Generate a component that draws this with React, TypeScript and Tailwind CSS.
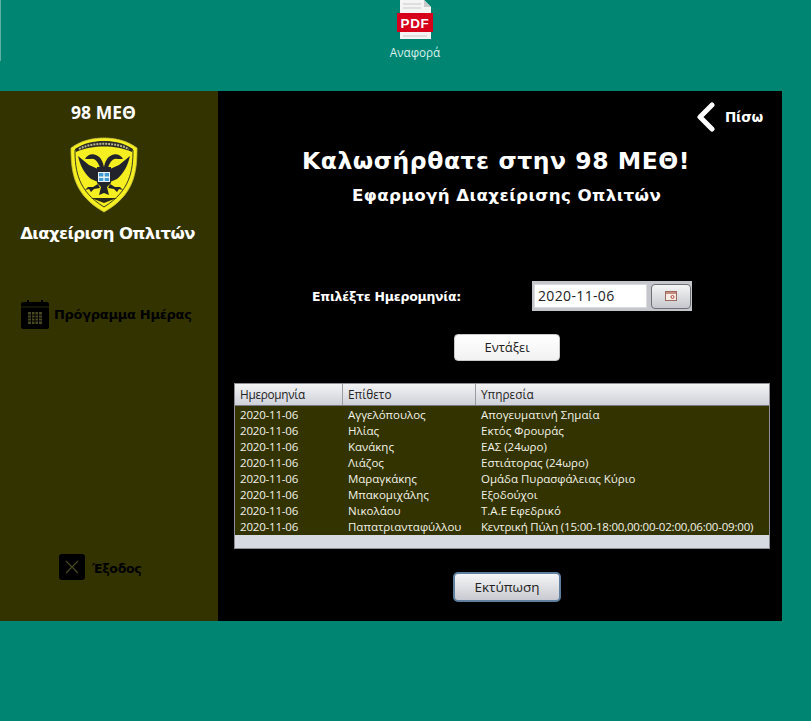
import React from "react";

const rows = [
  ["2020-11-06", "Αγγελόπουλος", "Απογευματινή Σημαία"],
  ["2020-11-06", "Ηλίας", "Εκτός Φρουράς"],
  ["2020-11-06", "Κανάκης", "ΕΑΣ (24ωρο)"],
  ["2020-11-06", "Λιάζος", "Εστιάτορας (24ωρο)"],
  ["2020-11-06", "Μαραγκάκης", "Ομάδα Πυρασφάλειας Κύριο"],
  ["2020-11-06", "Μπακομιχάλης", "Εξοδούχοι"],
  ["2020-11-06", "Νικολάου", "Τ.Α.Ε Εφεδρικό"],
  ["2020-11-06", "Παπατριανταφύλλου", "Κεντρική Πύλη (15:00-18:00,00:00-02:00,06:00-09:00)"],
];

const PdfIcon = () => (
  <svg width="36" height="39" viewBox="0 0 36 39">
    <path d="M3 0H27L34 7V39H3Z" fill="#f4f4f4" />
    <path d="M27 0V7H34Z" fill="#c9c9c9" />
    <path d="M6 4H24M6 8H24M6 36H30" stroke="#c8c8c8" strokeWidth="1" />
    <rect x="0" y="13" width="36" height="19" fill="#d6001c" />
    <text x="18" y="28" textAnchor="middle" fill="#fff" fontSize="13.5" fontWeight="700" fontFamily="'Liberation Sans', sans-serif" letterSpacing="0.6">PDF</text>
  </svg>
);

const Emblem = () => (
  <svg width="68" height="76" viewBox="0 0 68 76">
    <path d="M1 11C12 3 24 1 34 1C44 1 56 3 67 11C67 36 64 58 34 75C4 58 1 36 1 11Z" fill="#f5ee20" stroke="#c9c23a" strokeWidth="0.8" />
    <path d="M5 13C14 7 24 5 34 5C44 5 54 7 63 13C63 34 60 54 34 70C8 54 5 34 5 13Z" fill="none" stroke="#26261c" strokeWidth="0.9" />
    <path d="M5 12C14 6 24 4 34 4C44 4 54 6 63 12L62 15C53 11 44 9.500 34 9.500C24 9.500 15 11 6 15Z" fill="#2a2a28" />
    <path d="M9 12C17 8 26 6.800 34 6.800C42 6.800 51 8 59 12" fill="none" stroke="#b9b48a" strokeWidth="2" strokeDasharray="2 1" />
    {/* two headed eagle: wings, necks, body and claws */}
    <path d="M8 19L19 28L28 32V45L21 42C14 36 10 28 8 19Z" fill="#23232b" />
    <path d="M60 19L49 28L40 32V45L47 42C54 36 58 28 60 19Z" fill="#23232b" />
    <path d="M15 22C17 18 22 16 26 18C31 20 33 25 34 30C35 25 37 20 42 18C46 16 51 18 53 22L47 22C44 21 40 24 38 31H30C28 24 24 21 21 22Z" fill="#23232b" />
    <path d="M27 30H41V46L37 50L39 58L34 56L29 58L31 50L27 46Z" fill="#23232b" />
    <path d="M28 47L23 50L18 50L15 53L19 52L21 55L24 52L30 51ZM40 47L45 50L50 50L53 53L49 52L47 55L44 52L38 51Z" fill="#23232b" />
    <rect x="28" y="35" width="12" height="10" fill="#e8f2f7" />
    <path d="M29 36H33.300V39.500H29ZM34.700 36H39V39.500H34.700ZM29 41H33.300V44H29ZM34.700 41H39V44H34.700Z" fill="#3f9ad6" />
    <path d="M21 61H47L34 66Z" fill="#2a2a1c" />
  </svg>
);

const CalendarIcon = () => (
  <svg width="28" height="30" viewBox="0 0 28 30">
    <path d="M2 3H6V1H8V3H20V1H22V3H26C27 3 28 4 28 5V28C28 29 27 30 26 30H2C1 30 0 29 0 28V5C0 4 1 3 2 3Z" fill="#000" />
    <path d="M0 8H28" stroke="#333300" strokeWidth="0.8" />
    <path d="M7 13H21V25H7Z" fill="#4a4a22" />
    <path d="M7 16H21M7 19H21M7 22H21M10.500 13V25M14 13V25M17.500 13V25" stroke="#000" strokeWidth="1" />
  </svg>
);

const App = () => {
  return (
    <div className="w-[811px] h-[721px] bg-[#008573] overflow-hidden font-['Open_Sans','Noto_Sans',sans-serif]">
      {/* top strip with the report icon */}
      <div className="h-[91px] flex">
        <div className="w-px h-[61px] bg-[#5fb0a4]" />
        <div className="ml-[383px] w-[62px] flex flex-col items-center">
          <div className="h-[39px]">
            <PdfIcon />
          </div>
          <span className="mt-[5px] text-[11.700px] leading-[16px] text-[#d9f2ee] whitespace-nowrap">Αναφορά</span>
        </div>
      </div>

      <div className="w-[782px] h-[530px] flex bg-black">
        {/* sidebar */}
        <div className="w-[218px] bg-[#333300] flex flex-col items-center shrink-0">
          <div className="mt-[9px] text-[17.500px] leading-[24px] font-bold text-white -ml-[11px]">98 ΜΕΘ</div>
          <div className="mt-[13px] -ml-[11px] h-[76px]">
            <Emblem />
          </div>
          <div className="mt-[8px] text-[16.500px] leading-[26px] font-bold text-white -ml-[3px] font-['DejaVu_Sans',sans-serif] tracking-[-0.6px]">Διαχείριση Οπλιτών</div>
          <div className="mt-[52px] self-start ml-[21px] flex items-center gap-[5px]">
            <CalendarIcon />
            <span className="pt-[2px] text-[13px] font-bold text-black font-['DejaVu_Sans',sans-serif] tracking-[-0.3px]">Πρόγραμμα Ημέρας</span>
          </div>
          <div className="mt-[225px] self-start ml-[59px] flex items-center gap-[7px]">
            <div className="w-[26px] h-[26px] rounded-[3px] bg-black flex items-center justify-center">
              <svg width="16" height="16" viewBox="0 0 16 16">
                <path d="M2 2L14 14M14 2L2 14" stroke="#4a4a22" strokeWidth="1.200" />
              </svg>
            </div>
            <span className="pt-[4px] text-[12.500px] font-bold text-black font-['DejaVu_Sans',sans-serif] tracking-[-0.3px]">Έξοδος</span>
          </div>
        </div>

        {/* main */}
        <div className="flex-1 flex flex-col">
          <div className="h-[52px] flex justify-end items-center pr-[19px] gap-[9px]">
            <svg width="20" height="30" viewBox="0 0 20 30">
              <path d="M16 3L4 15L16 27" fill="none" stroke="#fff" strokeWidth="5" strokeLinecap="round" strokeLinejoin="round" />
            </svg>
            <span className="text-[13.500px] font-bold text-white font-['DejaVu_Sans',sans-serif] tracking-[-0.2px]">Πίσω</span>
          </div>
          <div className="mt-[2px] pl-[84px] text-[23.500px] leading-[32px] font-bold text-white font-['DejaVu_Sans',sans-serif] tracking-[0.53px] whitespace-nowrap">
            Καλωσήρθατε στην 98 ΜΕΘ!
          </div>
          <div className="mt-[6px] pl-[134px] text-[16.700px] leading-[24px] font-bold text-white font-['DejaVu_Sans',sans-serif] tracking-[0.4px] whitespace-nowrap">
            Εφαρμογή Διαχείρισης Οπλιτών
          </div>

          <div className="mt-[74px] flex items-center">
            <span className="ml-[94px] w-[220px] pt-[3px] text-[12.500px] font-bold text-white font-['DejaVu_Sans',sans-serif] tracking-[-0.25px]">Επιλέξτε Ημερομηνία:</span>
            <div className="w-[160px] h-[30px] bg-[#c4c6cc] flex items-center pl-[2px] pr-[1px] gap-[4px]">
              <div className="w-[113px] h-[24px] bg-white border border-[#d9dbe0] pl-[3px] text-[14px] leading-[22px] text-[#222] tracking-[0.35px]">2020-11-06</div>
              <div className="w-[40px] h-[25px] rounded-[4px] border border-[#6f7176] bg-gradient-to-b from-[#f5f5f6] to-[#c6c8cd] flex items-center justify-center">
                <svg width="14" height="12" viewBox="0 0 14 12">
                  <rect x="1.500" y="1.500" width="11" height="9" fill="#f7ede6" stroke="#9a6a5c" />
                  <path d="M2 3H12" stroke="#b86a5c" strokeWidth="1.500" />
                  <circle cx="8.500" cy="7" r="1.500" fill="none" stroke="#b0483c" />
                </svg>
              </div>
            </div>
          </div>

          <button className="mt-[23px] ml-[236px] w-[106px] h-[27px] rounded-[4px] bg-gradient-to-b from-white to-[#f2f2f2] border border-[#c8c8c8] text-[13px] leading-[25px] text-[#222]">
            Εντάξει
          </button>

          <div className="mt-[22px] ml-[16px] w-[536px] h-[166px] flex flex-col border border-[#8d8f94] bg-[#d8dae1]">
            <div className="h-[22px] flex shrink-0 bg-gradient-to-b from-[#f4f4f6] to-[#cfd1d9] border-b border-[#77797e] text-[11.800px] leading-[21px] text-[#222]">
              <div className="w-[108px] pl-[5px] border-r border-[#9a9ca2] tracking-[-0.3px]">Ημερομηνία</div>
              <div className="w-[133px] pl-[5px] border-r border-[#9a9ca2]">Επίθετο</div>
              <div className="flex-1 pl-[5px]">Υπηρεσία</div>
            </div>
            <div className="h-[129px] bg-[#333300] pt-px shrink-0">
              {rows.map((row) => (
                <div key={row[1]} className="h-[16px] flex text-[11.500px] leading-[16px] text-[#f2f2ea] whitespace-nowrap">
                  <div className="w-[108px] pl-[5px] tracking-[-0.2px]">{row[0]}</div>
                  <div className="w-[133px] pl-[5px]">{row[1]}</div>
                  <div className={row[2].includes(":") ? "flex-1 pl-[5px] tracking-[-0.2px]" : "flex-1 pl-[5px]"}>{row[2]}</div>
                </div>
              ))}
            </div>
          </div>

          <button className="mt-[23px] ml-[235px] w-[108px] h-[30px] rounded-[5px] border-2 border-[#5f7f9f] bg-gradient-to-b from-[#f6f6f7] to-[#c8cad1] text-[13.500px] leading-[26px] text-[#222]">
            Εκτύπωση
          </button>
        </div>
      </div>
    </div>
  );
};

export default App;
